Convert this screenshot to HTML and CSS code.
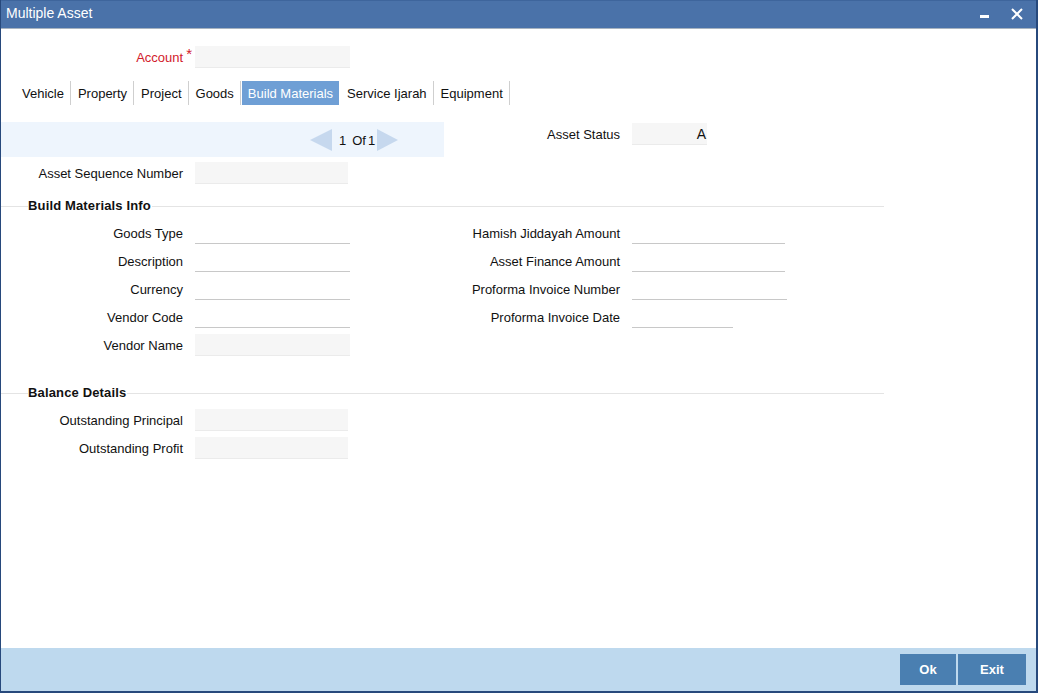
FILE: index.html
```html
<!DOCTYPE html>
<html>
<head>
<meta charset="utf-8">
<title>Multiple Asset</title>
<link rel="stylesheet" href="styles.css">
</head>
<body>
<div class="window">
  <div class="titlebar">
    <span class="title">Multiple Asset</span>
    <div class="win-controls">
      <svg class="ico-min" width="10" height="4" viewBox="0 0 10 4"><rect x="0" y="0" width="9" height="3" fill="#fff"/></svg>
      <svg class="ico-close" width="12" height="12" viewBox="0 0 12 12"><path d="M1 1 L11 11 M11 1 L1 11" stroke="#fff" stroke-width="2" fill="none"/></svg>
    </div>
  </div>
  <div class="content">
    <div class="row account-row">
      <label class="lbl lbl-account">Account<span class="req">*</span></label>
      <div class="field filled w155"></div>
    </div>
    <div class="tabs">
      <span class="tab">Vehicle</span>
      <span class="tab">Property</span>
      <span class="tab">Project</span>
      <span class="tab">Goods</span>
      <span class="tab active">Build Materials</span>
      <span class="tab">Service Ijarah</span>
      <span class="tab">Equipment</span>
    </div>
    <div class="pager-row">
      <div class="pager-band">
        <span class="arrow arrow-left"></span>
        <span class="pager-text"><span class="pg-cur">1</span><span class="pg-of">Of</span><span class="pg-tot">1</span></span>
        <span class="arrow arrow-right"></span>
      </div>
      <label class="lbl lbl-status">Asset Status</label>
      <div class="field filled status-field">A</div>
    </div>
    <div class="row seq-row">
      <label class="lbl">Asset Sequence Number</label>
      <div class="field filled w153"></div>
    </div>

    <div class="section">
      <div class="section-head"><span class="line-l"></span><span class="sec-title">Build Materials Info</span><span class="line-r"></span></div>
      <div class="grid">
        <label class="lbl">Goods Type</label>
        <div class="field line w155"></div>
        <label class="lbl lbl-right">Hamish Jiddayah Amount</label>
        <div class="field line w153"></div>

        <label class="lbl">Description</label>
        <div class="field line w155"></div>
        <label class="lbl lbl-right">Asset Finance Amount</label>
        <div class="field line w153"></div>

        <label class="lbl">Currency</label>
        <div class="field line w155"></div>
        <label class="lbl lbl-right">Proforma Invoice Number</label>
        <div class="field line w155"></div>

        <label class="lbl">Vendor Code</label>
        <div class="field line w155"></div>
        <label class="lbl lbl-right">Proforma Invoice Date</label>
        <div class="field line w101"></div>

        <label class="lbl">Vendor Name</label>
        <div class="field filled w155"></div>
      </div>
    </div>

    <div class="section section-balance">
      <div class="section-head"><span class="line-l"></span><span class="sec-title">Balance Details</span><span class="line-r"></span></div>
      <div class="grid">
        <label class="lbl">Outstanding Principal</label>
        <div class="field filled w153"></div>
        <label class="lbl">Outstanding Profit</label>
        <div class="field filled w153"></div>
      </div>
    </div>
  </div>
  <div class="footer">
    <button class="btn btn-ok">Ok</button>
    <button class="btn btn-exit">Exit</button>
  </div>
</div>
</body>
</html>
```

FILE: styles.css
```css
* { box-sizing: border-box; }
html, body { margin: 0; padding: 0; background: #fff; }
body {
  font-family: "Liberation Sans", Arial, sans-serif;
  font-size: 13px;
  color: #111;
}
.window {
  width: 1038px;
  height: 693px;
  display: flex;
  flex-direction: column;
  border-left: 1px solid #27497c;
  border-right: 2px solid #27497c;
  border-bottom: 2px solid #27497c;
  overflow: hidden;
}
.titlebar {
  height: 29px;
  flex: none;
  background: #4a72a9;
  border-top: 1px solid #3e659c;
  border-bottom: 1px solid #a7b3c0;
  display: flex;
  align-items: center;
  justify-content: space-between;
  padding-left: 5px;
  padding-right: 13px;
}
.title {
  color: #fff;
  font-size: 14px;
  line-height: 16px;
  margin-top: -4px;
}
.win-controls {
  display: flex;
  align-items: flex-start;
  gap: 21px;
  height: 20px;
}
.ico-min { margin-top: 10px; display: block; }
.ico-close { margin-top: 3px; display: block; }

.content {
  flex: 1;
  display: flex;
  flex-direction: column;
}
.row {
  display: flex;
  align-items: center;
  height: 22px;
}
.lbl {
  width: 182px;
  height: 22px;
  flex: none;
  text-align: right;
  white-space: nowrap;
  line-height: 22px;
  padding-top: 1px;
}
.account-row { margin-top: 17px; }
.lbl-account {
  width: 194px;
  color: #d2202b;
  padding-right: 3px;
  padding-top: 0;
}
.req {
  color: #d2202b;
  font-size: 15px;
  margin-left: 3px;
  position: relative;
  top: -3px;
}
.field { height: 22px; flex: none; }
.filled { background: #f6f6f6; border-bottom: 1px solid #ebebeb; }
.line { border-bottom: 1px solid #c8c8c8; }
.w155 { width: 155px; }
.w153 { width: 153px; }
.w101 { width: 101px; }
.seq-row .field { margin-left: 12px; }

.tabs {
  display: flex;
  margin-top: 13px;
  padding-left: 15px;
  height: 24px;
}
.tab {
  padding: 1px 6px 0 7px;
  line-height: 23px;
  font-size: 13px;
  border-right: 1px solid #cfcfcf;
  color: #111;
}
.tab:first-child { padding-left: 6px; }
.tab.active {
  background: #6f9fd5;
  color: #fff;
  border-right: none;
  margin-left: 1px;
  margin-right: 1px;
  padding: 1px 6px 0 6px;
}

.pager-row {
  display: flex;
  align-items: flex-start;
  margin-top: 17px;
  height: 35px;
}
.pager-band {
  width: 443px;
  height: 35px;
  background: #eef5fd;
  display: flex;
  align-items: center;
  padding-left: 309px;
  flex: none;
}
.arrow {
  width: 0;
  height: 0;
  border-top: 11px solid transparent;
  border-bottom: 11px solid transparent;
}
.arrow-left { border-right: 22px solid #c6d8ee; }
.arrow-right { border-left: 21px solid #c6d8ee; }
.pager-text {
  display: flex;
  margin: 0 2px 0 7px;
  line-height: 22px;
  padding-top: 2px;
}
.pg-of { margin-left: 6px; margin-right: 2px; }
.lbl-status {
  width: 176px;
  margin-top: 0;
  padding-top: 2px;
}
.status-field {
  width: 75px;
  margin-left: 12px;
  margin-top: 1px;
  text-align: right;
  line-height: 22px;
  font-size: 14px;
  padding-right: 1px;
  padding-top: 0;
}
.seq-row { margin-top: 5px; }

.section { width: 883px; }
.section-head {
  display: flex;
  align-items: center;
  height: 20px;
  margin-top: 12px;
}
.line-l { width: 27px; border-top: 1px solid #e4e4e4; }
.line-r { flex: 1; border-top: 1px solid #e4e4e4; }
.sec-title {
  font-weight: bold;
  line-height: 20px;
  padding-right: 1px;
  margin-top: 0;
  letter-spacing: 0.15px;
}
.grid {
  display: grid;
  grid-template-columns: 182px 155px 258px auto;
  column-gap: 12px;
  row-gap: 6px;
  margin-top: 6px;
  align-items: start;
}
.grid .lbl-right { width: auto; }
.section-balance .section-head { margin-top: 26px; height: 22px; }
.section-balance .grid {
  grid-template-columns: 182px 155px;
  margin-top: 5px;
}
.section-balance .grid .lbl { grid-column: 1; }
.section-balance .grid .field { grid-column: 2; }

.footer {
  height: 43px;
  flex: none;
  background: #bed9ee;
  display: flex;
  justify-content: flex-end;
  align-items: flex-start;
  padding-top: 6px;
  padding-right: 10px;
  gap: 2px;
}
.btn {
  height: 31px;
  border: none;
  background: #4a7fb1;
  color: #fff;
  font-family: "Liberation Sans", Arial, sans-serif;
  font-weight: bold;
  font-size: 13px;
  padding: 0;
  margin: 0;
}
.btn-ok { width: 56px; }
.btn-exit { width: 68px; }
```
